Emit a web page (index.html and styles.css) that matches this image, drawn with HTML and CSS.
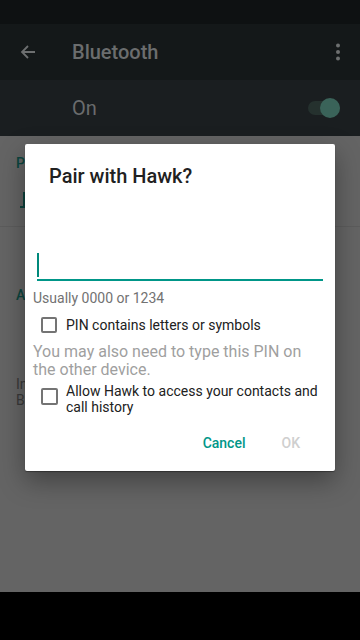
FILE: index.html
```html
<!DOCTYPE html>
<html lang="en">
<head>
<meta charset="utf-8">
<title>Bluetooth</title>
<link rel="stylesheet" href="styles.css">
</head>
<body>
<div class="screen">
  <div class="statusbar"></div>
  <div class="toolbar">
    <svg class="back" width="16" height="16" viewBox="0 0 16 16"><path d="M15 8H2M8 2L2 8l6 6" fill="none" stroke="#6d6f70" stroke-width="1.8"/></svg>
    <div class="toolbar-title">Bluetooth</div>
    <svg class="kebab" width="6" height="18" viewBox="0 0 6 18"><circle cx="3" cy="2.5" r="2" fill="#6d6f70"/><circle cx="3" cy="9" r="2" fill="#6d6f70"/><circle cx="3" cy="15.5" r="2" fill="#6d6f70"/></svg>
  </div>
  <div class="switchbar">
    <div class="switch-label">On</div>
    <div class="toggle"><div class="track"></div><div class="thumb"></div></div>
  </div>
  <div class="content">
    <div class="section">
      <div class="header">Paired devices</div>
      <div class="device">
        <svg class="dev-icon" width="10" height="18" viewBox="0 0 10 18"><path d="M4 1v15H0" fill="none" stroke="#0d433d" stroke-width="2"/></svg>
        <div class="dev-name">Hawk</div>
      </div>
    </div>
    <div class="section">
      <div class="header">Available devices</div>
      <div class="note">Incoming pairing request<br>Bluetooth</div>
    </div>
  </div>
  <div class="navbar"></div>

  <div class="dialog">
    <div class="d-title">Pair with Hawk?</div>
    <div class="pin-field"><span class="cursor"></span></div>
    <div class="helper">Usually 0000 or 1234</div>
    <div class="check-row">
      <span class="box"></span>
      <span class="check-text">PIN contains letters or symbols</span>
    </div>
    <div class="message">You may also need to type this PIN on the other device.</div>
    <div class="check-row two">
      <span class="box"></span>
      <span class="check-text">Allow Hawk to access your contacts and call history</span>
    </div>
    <div class="actions">
      <span class="btn cancel">Cancel</span>
      <span class="btn ok">OK</span>
    </div>
  </div>
</div>
</body>
</html>
```
FILE: styles.css
```css
* { box-sizing: border-box; }
html, body { margin: 0; padding: 0; }
body {
  width: 360px;
  height: 640px;
  overflow: hidden;
  font-family: Roboto, "Liberation Sans", sans-serif;
  background: #000;
}
.screen {
  position: relative;
  width: 360px;
  height: 640px;
  display: flex;
  flex-direction: column;
}
.statusbar { height: 24px; background: #0e1112; }
.toolbar {
  height: 56px;
  background: #141819;
  display: flex;
  align-items: center;
  padding-left: 20px;
}
.back { flex: none; }
.toolbar-title {
  margin-left: 36px;
  font-size: 20px;
  font-weight: 500;
  color: #6b6d6e;
  flex: 1;
}
.kebab { margin-right: 19px; }
.switchbar {
  height: 56px;
  background: #1a1e20;
  display: flex;
  align-items: center;
  padding-left: 72px;
}
.switch-label {
  flex: 1;
  font-size: 20px;
  color: #6a6c6d;
}
.toggle {
  position: relative;
  width: 34px;
  height: 20px;
  margin-right: 20px;
}
.track {
  position: absolute;
  left: 2px; top: 3px;
  width: 32px; height: 14px;
  border-radius: 7px;
  background: #25312e;
}
.thumb {
  position: absolute;
  right: 0; top: 0;
  width: 20px; height: 20px;
  border-radius: 50%;
  background: #3a6359;
}
.content {
  flex: 1;
  background: #646464;
}
.section { border-bottom: 1px solid #5c5c5c; padding-left: 16px; }
.section:last-child { border-bottom: none; }
.header {
  font-size: 14px;
  font-weight: 500;
  color: #0c453e;
  padding-top: 19px;
  line-height: 16px;
}
.device {
  display: flex;
  align-items: center;
  height: 58px;
  padding-left: 4px;
}
.dev-name { margin-left: 40px; color: #2e2e2e; font-size: 16px; }
.section:first-child { height: 91px; }
.section:last-child .header { padding-top: 60px; }
.note {
  margin-top: 73px;
  font-size: 14px;
  line-height: 16px;
  color: #393939;
}
.navbar { height: 48px; background: #000; }

.dialog {
  position: absolute;
  left: 25px;
  top: 144px;
  width: 310px;
  background: #fff;
  border-radius: 2px;
  padding: 20px 0 20px 0;
  box-shadow: 0 1px 1px rgba(0,0,0,0.35), 0 10px 26px rgba(0,0,0,0.35);
}
.d-title {
  padding-left: 24px;
  font-size: 20px;
  line-height: 24px;
  font-weight: 500;
  color: #212121;
}
.pin-field {
  margin: 65px 12px 0 12px;
  height: 28px;
  border-bottom: 2px solid #009688;
}
.cursor {
  display: block;
  width: 2px;
  height: 24px;
  background: #00897b;
}
.helper {
  margin: 9px 0 0 8px;
  font-size: 14px;
  line-height: 16px;
  color: #727272;
}
.check-row {
  display: flex;
  align-items: center;
  margin: 11px 16px 0 16px;
  min-height: 16px;
}
.box {
  flex: none;
  width: 16px;
  height: 16px;
  border: 2px solid #747474;
  border-radius: 2px;
  margin-right: 9px;
}
.check-text {
  font-size: 14px;
  line-height: 16px;
  color: #212121;
}
.check-row.two {
  margin-top: 4px;
  align-items: flex-start;
}
.check-row.two .box { margin-top: 5px; width: 17px; height: 17px; margin-right: 8px; }
.message {
  margin: 10px 24px 0 8px;
  font-size: 16px;
  line-height: 18px;
  color: #9f9f9f;
}
.actions {
  display: flex;
  justify-content: flex-end;
  gap: 36px;
  margin-top: 20px;
  padding-right: 35px;
}
.btn {
  font-size: 14px;
  line-height: 16px;
  font-weight: 500;
}
.cancel { color: #009688; }
.ok { color: #cfcfcf; }
```
